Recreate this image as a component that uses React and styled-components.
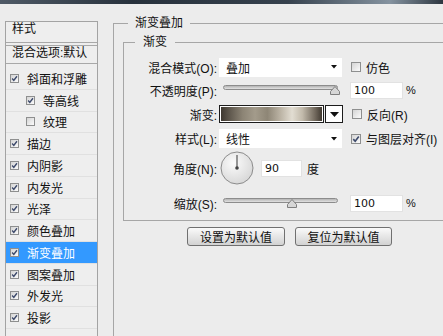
import React from "react";
import styled, { createGlobalStyle } from "styled-components";

const FONT = `"Liberation Sans", "Noto Sans CJK SC", sans-serif`;

const Global = createGlobalStyle`
  html, body {
    margin: 0;
    background: #ececec;
    overflow: hidden;
    font-family: ${FONT};
    font-size: 12px;
    color: #111;
  }
`;

const Page = styled.div`
  width: 443px;
  height: 336px;
  overflow: hidden;
`;

const TitleBar = styled.div`
  height: 4px;
  background: linear-gradient(90deg, #4f5a66, #27313c 30%, #36414d 65%, #8593a0 88%, #2d3640);
`;

const Body = styled.div`
  display: flex;
  align-items: flex-start;
`;

/* ---------- left style list ---------- */

const StylePanel = styled.div`
  margin: 17px 0 0 5px;
  width: 93px;
  height: 330px;
  box-sizing: border-box;
  border: 1px solid #a3a3a3;
  background: #eeeeee;
  flex-shrink: 0;
`;

const PanelHead = styled.div`
  height: 21px;
  box-sizing: border-box;
  padding: 0 0 0 6px;
  line-height: 15px;
  font-size: 12px;
  border-bottom: 1px solid #a8a8a8;
`;

const BlendRow = styled.div`
  margin-top: 2px;
  height: 19px;
  box-sizing: border-box;
  border-top: 1px solid #a8a8a8;
  border-bottom: 1px solid #a8a8a8;
  padding-left: 6px;
  line-height: 15px;
  white-space: nowrap;
  overflow: hidden;
`;

const List = styled.div`
  margin-top: 4px;
`;

const Item = styled.div`
  display: flex;
  align-items: center;
  gap: 8px;
  height: 21.75px;
  box-sizing: border-box;
  padding-left: ${(p) => (p.$indent ? 20 : 4)}px;
  border-bottom: 1px solid #e0e0e0;
  white-space: nowrap;
  background: ${(p) => (p.$active ? "#3399ff" : "transparent")};
  color: ${(p) => (p.$active ? "#fff" : "#111")};
`;

/* ---------- checkbox ---------- */

const Box = styled.span`
  display: inline-flex;
  align-items: center;
  justify-content: center;
  width: ${(p) => p.$size}px;
  height: ${(p) => p.$size}px;
  box-sizing: border-box;
  border: 1px solid #8e8f8f;
  background: linear-gradient(135deg, #d4d4d4, #fbfbfb);
  flex-shrink: 0;
`;

const Check = ({ on, size = 9 }) => (
  <Box $size={size}>
    {on && (
      <svg width={size - 2} height={size - 2} viewBox="0 0 8 8">
        <path d="M1.3 4.1 L3.2 6.2 L6.8 1.4" fill="none" stroke="#3d4a6b" strokeWidth="1.6" />
      </svg>
    )}
  </Box>
);

/* ---------- group boxes ---------- */

const Group = styled.fieldset`
  margin: 11px -30px 0 15px;
  padding: 0;
  flex: 1;
  min-height: 400px;
  border: 1px solid #a6a6a6;
`;

const Legend = styled.legend`
  margin-left: ${(p) => p.$offset}px;
  padding: 0 ${(p) => p.$pad}px;
  line-height: 16px;
  font-size: 12px;
`;

const SubGroup = styled.fieldset`
  margin: 3px 0 0 9px;
  padding: 6px 0 6px 0;
  border: 1px solid #a6a6a6;
`;

const Row = styled.div`
  display: flex;
  align-items: center;
  height: ${(p) => p.$h}px;
  margin-top: ${(p) => p.$mt || 0}px;
`;

const Label = styled.span`
  width: 93px;
  margin-right: 2px;
  text-align: right;
  white-space: nowrap;
  flex-shrink: 0;
`;

const Side = styled.div`
  display: flex;
  align-items: center;
  margin-left: ${(p) => p.$ml}px;
  gap: 5px;
  white-space: nowrap;
`;

/* ---------- controls ---------- */

const Select = styled.div`
  width: 123px;
  height: 19px;
  box-sizing: border-box;
  background: #fff;
  display: flex;
  align-items: center;
  justify-content: space-between;
  padding: 0 5px 0 7px;
`;

const SmallArrow = () => (
  <svg width="6" height="4" viewBox="0 0 6 4">
    <path d="M0 0 H6 L3 3.5 Z" fill="#111" />
  </svg>
);

const SliderWrap = styled.div`
  width: 124px;
  height: 14px;
  display: flex;
  align-items: flex-start;
  padding-top: 2px;
  box-sizing: border-box;
`;

const Track = styled.div`
  position: relative;
  margin-left: 4px;
  width: 115px;
  height: 5px;
  box-sizing: border-box;
  border: 1px solid #8c8c8c;
  border-radius: 3px;
  background: linear-gradient(#b4b4b4, #e2e2e2);
`;

const Thumb = styled.svg`
  position: absolute;
  top: 0;
  margin-left: -5px;
`;

const Slider = ({ pos }) => (
  <SliderWrap>
    <Track>
      <Thumb width="10" height="9" viewBox="0 0 10 9" style={{ left: `${pos * 100}%` }}>
        <path d="M5 0.5 L9.5 5.5 V8.5 H0.5 V5.5 Z" fill="#d6d6d6" stroke="#7e7e7e" />
      </Thumb>
    </Track>
  </SliderWrap>
);

const Field = styled.div`
  width: ${(p) => p.$w}px;
  height: 17px;
  box-sizing: border-box;
  background: #fff;
  border: 1px solid #e2e2e2;
  padding-left: 3px;
  line-height: 15px;
  font-size: 11px;
  font-family: "DejaVu Sans", ${FONT};
`;

const Unit = styled.span`
  font-size: 11px;
  margin-left: -2px;
`;

const GradPicker = styled.div`
  width: 124px;
  height: 18px;
  display: flex;
  gap: 1px;
`;

const GradBar = styled.div`
  flex: 1;
  border: 1px solid #1c1c1c;
  box-shadow: inset 0 0 0 1px #fff;
  background: linear-gradient(
    90deg,
    #3a342d 0%,
    #5a5349 8%,
    #8c8475 22%,
    #a39b8b 34%,
    #8e8676 46%,
    #b9b1a2 58%,
    #e2ddd2 70%,
    #c2baab 80%,
    #746b5f 92%,
    #3a332b 100%
  );
`;

const DropBtn = styled.div`
  width: 18px;
  box-sizing: border-box;
  border: 1px solid #1c1c1c;
  background: #fff;
  display: flex;
  align-items: center;
  justify-content: center;
`;

const Dial = ({ angle }) => {
  const r = (angle * Math.PI) / 180;
  return (
    <svg width="34" height="34" viewBox="0 0 34 34" style={{ marginLeft: 1 }}>
      <defs>
        <radialGradient id="dialFill" cx="40%" cy="35%" r="70%">
          <stop offset="0" stopColor="#fbfbfb" />
          <stop offset="1" stopColor="#d6d6d6" />
        </radialGradient>
      </defs>
      <circle cx="17" cy="17" r="16" fill="url(#dialFill)" stroke="#8c8c8c" />
      <line
        x1="17"
        y1="17"
        x2={17 + 13 * Math.cos(r)}
        y2={17 - 13 * Math.sin(r)}
        stroke="#555"
        strokeWidth="1.2"
      />
      <circle cx="17" cy="17" r="1.8" fill="#444" />
    </svg>
  );
};

const Buttons = styled.div`
  display: flex;
  gap: 10px;
  margin-top: 6px;
  padding-left: 73px;
`;

const Button = styled.button`
  width: ${(p) => p.$w}px;
  height: 19px;
  padding: 0;
  border: 1px solid #707070;
  border-radius: 3px;
  background: linear-gradient(#fafafa, #e6e6e6 50%, #d2d2d2);
  font-family: ${FONT};
  font-size: 12px;
  color: #111;
`;

const styles = [
  { name: "斜面和浮雕", on: true },
  { name: "等高线", on: true, indent: true },
  { name: "纹理", on: false, indent: true },
  { name: "描边", on: true },
  { name: "内阴影", on: true },
  { name: "内发光", on: true },
  { name: "光泽", on: true },
  { name: "颜色叠加", on: true },
  { name: "渐变叠加", on: true, active: true },
  { name: "图案叠加", on: true },
  { name: "外发光", on: true },
  { name: "投影", on: true },
];

export default function App() {
  return (
    <Page>
      <Global />
      <TitleBar />
      <Body>
        <StylePanel>
          <PanelHead>样式</PanelHead>
          <BlendRow>混合选项:默认</BlendRow>
          <List>
            {styles.map((s) => (
              <Item key={s.name} $indent={s.indent} $active={s.active}>
                <Check on={s.on} />
                {s.name}
              </Item>
            ))}
            <Item />
          </List>
        </StylePanel>

        <Group>
          <Legend $offset={14} $pad={7}>渐变叠加</Legend>
          <SubGroup>
            <Legend $offset={11} $pad={8}>渐变</Legend>

            <Row $h={22}>
              <Label>混合模式(O):</Label>
              <Select>
                叠加
                <SmallArrow />
              </Select>
              <Side $ml={9}>
                <Check on={false} size={10} />
                仿色
              </Side>
            </Row>

            <Row $h={24}>
              <Label>不透明度(P):</Label>
              <Slider pos={0.98} />
              <Side $ml={7}>
                <Field $w={53}>100</Field>
                <Unit>%</Unit>
              </Side>
            </Row>

            <Row $h={24}>
              <Label>渐变:</Label>
              <GradPicker>
                <GradBar />
                <DropBtn>
                  <svg width="9" height="5" viewBox="0 0 9 5">
                    <path d="M0 0 H9 L4.5 5 Z" fill="#111" />
                  </svg>
                </DropBtn>
              </GradPicker>
              <Side $ml={9}>
                <Check on={false} size={10} />
                反向(R)
              </Side>
            </Row>

            <Row $h={25}>
              <Label>样式(L):</Label>
              <Select>
                线性
                <SmallArrow />
              </Select>
              <Side $ml={9}>
                <Check on size={10} />
                与图层对齐(I)
              </Side>
            </Row>

            <Row $h={34}>
              <Label>角度(N):</Label>
              <Dial angle={90} />
              <Side $ml={7}>
                <Field $w={41}>90</Field>
                度
              </Side>
            </Row>

            <Row $h={22} $mt={7}>
              <Label>缩放(S):</Label>
              <Slider pos={0.6} />
              <Side $ml={7}>
                <Field $w={53}>100</Field>
                <Unit>%</Unit>
              </Side>
            </Row>
          </SubGroup>

          <Buttons>
            <Button $w={98}>设置为默认值</Button>
            <Button $w={97}>复位为默认值</Button>
          </Buttons>
        </Group>
      </Body>
    </Page>
  );
}
